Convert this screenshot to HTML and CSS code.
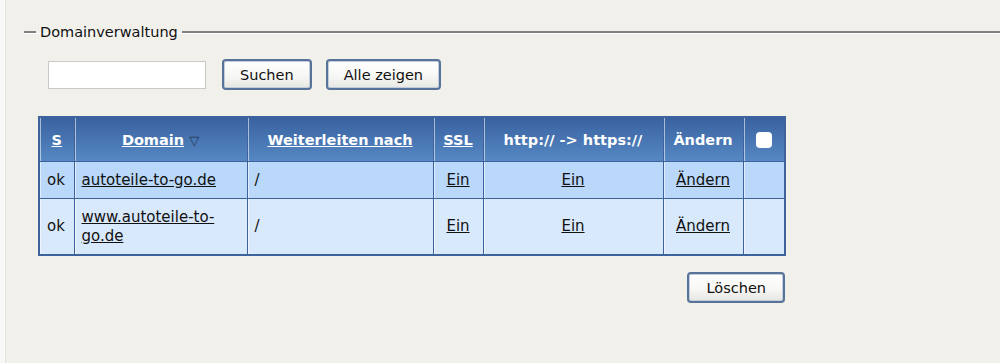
FILE: index.html
```html
<!DOCTYPE html>
<html lang="de">
<head>
  <meta charset="UTF-8" />
  <title>Domainverwaltung</title>
  <link rel="stylesheet" href="styles.css">
</head>
<body>
  <div class="page">
    <fieldset class="box">
      <legend>Domainverwaltung</legend>

      <form class="search">
        <input type="text" class="field">
        <button type="button" class="btn">Suchen</button>
        <button type="button" class="btn">Alle zeigen</button>
      </form>

      <table class="domains">
        <colgroup>
          <col class="c-s"><col class="c-domain"><col class="c-fwd"><col class="c-ssl">
          <col class="c-redir"><col class="c-edit"><col class="c-check">
        </colgroup>
        <thead>
          <tr>
            <th><a href="#">S</a></th>
            <th><a href="#">Domain</a> <span class="sort">&#9661;</span></th>
            <th><a href="#">Weiterleiten nach</a></th>
            <th><a href="#">SSL</a></th>
            <th>http:// -&gt; https://</th>
            <th>Ändern</th>
            <th><span class="check"></span></th>
          </tr>
        </thead>
        <tbody>
          <tr class="odd">
            <td>ok</td>
            <td><a href="#">autoteile-to-go.de</a></td>
            <td>/</td>
            <td class="mid"><a href="#">Ein</a></td>
            <td class="mid"><a href="#">Ein</a></td>
            <td class="mid"><a href="#">Ändern</a></td>
            <td></td>
          </tr>
          <tr class="even">
            <td>ok</td>
            <td><a href="#">www.autoteile-to-go.de</a></td>
            <td>/</td>
            <td class="mid"><a href="#">Ein</a></td>
            <td class="mid"><a href="#">Ein</a></td>
            <td class="mid"><a href="#">Ändern</a></td>
            <td></td>
          </tr>
        </tbody>
      </table>

      <div class="actions">
        <button type="button" class="btn">Löschen</button>
      </div>
    </fieldset>
  </div>
</body>
</html>
```

FILE: styles.css
```css
html, body {
  margin: 0;
  height: 100%;
}
body {
  font-family: "DejaVu Sans", Verdana, sans-serif;
  font-size: 14px;
  color: #111;
  background: #f1f0eb;
  border-left: 5px solid #f8f8f6;
  box-sizing: border-box;
}
.page {
  padding: 24px 0 0 18px;
  border-left: 1px solid #e3e3df;
  height: 100%;
  box-sizing: border-box;
}
.box {
  margin: 0 -20px 0 0;
  padding: 19px 0 0 24px;
  border: none;
  border-top: 2px solid #808080;
  box-shadow: inset 0 1px 0 #fff;
}
legend {
  margin-left: -12px;
  padding: 0 4px;
  font-size: 14.5px;
}
.search {
  display: flex;
  align-items: center;
  gap: 14px;
  margin: 0;
}
.field {
  width: 158px;
  height: 28px;
  box-sizing: border-box;
  border: 1px solid #c9c9c9;
  background: #fff;
  margin-right: 2px;
}
.btn {
  font-family: inherit;
  font-size: 14.5px;
  color: #111;
  height: 31px;
  padding: 0 16px;
  border: 2px solid #57739a;
  border-radius: 4px;
  background: linear-gradient(#ffffff, #f7f7f5 55%, #e6e6e2);
  box-shadow: inset 0 0 0 1px #c3ccd8;
}
.domains {
  margin: 26px 0 0 -10px;
  width: 746px;
  table-layout: fixed;
  border-collapse: collapse;
  border: 2px solid #3e629b;
}
.c-s { width: 35px; }
.c-domain { width: 173px; }
.c-fwd { width: 186px; }
.c-ssl { width: 50px; }
.c-redir { width: 180px; }
.c-edit { width: 80px; }
.c-check { width: 42px; }
.domains th,
.domains td {
  border: 1px solid #3e629b;
  box-shadow: inset 1px 0 0 rgba(255, 255, 255, 0.55);
}
.domains th {
  height: 43px;
  padding: 0;
  color: #fff;
  font-size: 14.5px;
  font-weight: bold;
  text-align: center;
  background: linear-gradient(#3962a0, #5688c3);
  white-space: nowrap;
}
.domains th a {
  color: #fff;
}
.sort {
  color: #243650;
  font-size: 13px;
  font-weight: normal;
}
.check {
  display: inline-block;
  width: 16px;
  height: 16px;
  border-radius: 4px;
  background: #fff;
  vertical-align: middle;
}
.domains td {
  padding: 2px 7px;
  font-size: 15px;
  line-height: 19px;
}
.odd td { height: 32px; background: #bad8f9; }
.even td { height: 51px; background: #d9e9fc; }
.domains td.mid { text-align: center; }
.domains td a { color: #111; }
.actions {
  width: 737px;
  display: flex;
  justify-content: flex-end;
  margin-top: 16px;
}
.actions .btn {
  padding: 0 17px;
}
```
